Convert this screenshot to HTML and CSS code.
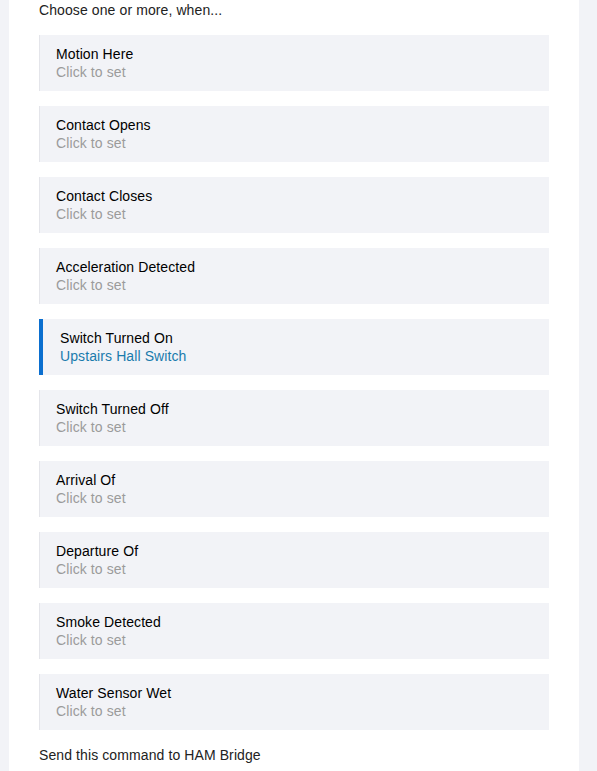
FILE: index.html
```html
<!DOCTYPE html>
<html lang="en">
<head>
  <meta charset="UTF-8" />
  <title>Choose triggers</title>
  <link rel="stylesheet" href="styles.css">
</head>
<body>
  <div class="page">
    <p class="label">Choose one or more, when...</p>

    <div class="option">
      <div class="name">Motion Here</div>
      <div class="value">Click to set</div>
    </div>
    <div class="option">
      <div class="name">Contact Opens</div>
      <div class="value">Click to set</div>
    </div>
    <div class="option">
      <div class="name">Contact Closes</div>
      <div class="value">Click to set</div>
    </div>
    <div class="option">
      <div class="name">Acceleration Detected</div>
      <div class="value">Click to set</div>
    </div>
    <div class="option selected">
      <div class="name">Switch Turned On</div>
      <div class="value">Upstairs Hall Switch</div>
    </div>
    <div class="option">
      <div class="name">Switch Turned Off</div>
      <div class="value">Click to set</div>
    </div>
    <div class="option">
      <div class="name">Arrival Of</div>
      <div class="value">Click to set</div>
    </div>
    <div class="option">
      <div class="name">Departure Of</div>
      <div class="value">Click to set</div>
    </div>
    <div class="option">
      <div class="name">Smoke Detected</div>
      <div class="value">Click to set</div>
    </div>
    <div class="option">
      <div class="name">Water Sensor Wet</div>
      <div class="value">Click to set</div>
    </div>

    <p class="label bottom">Send this command to HAM Bridge</p>
  </div>
</body>
</html>
```

FILE: styles.css
```css
body {
  margin: 0;
  background: #f2f3f7;
  font-family: "Liberation Sans", Arial, sans-serif;
  font-size: 14px;
  line-height: 18px;
  letter-spacing: 0.1px;
  color: #000;
}
.page {
  margin: 0 18px 0 9px;
  background: #fff;
  padding: 1px 30px 7px 30px;
  min-height: 771px;
  box-sizing: border-box;
}
.label {
  margin: 0 0 16px 0;
  color: #222;
}
.label.bottom {
  margin-top: 16px;
}
.option {
  background: #f2f3f7;
  border-left: 1px solid #e4e5ea;
  padding: 10px 16px;
  margin-bottom: 15px;
}
.option:last-of-type {
  margin-bottom: 0;
}
.name {
  color: #000;
}
.value {
  color: #9b9b9b;
}
.option.selected {
  border-left: 4px solid #0b6fcf;
  padding-left: 17px;
}
.option.selected .value {
  color: #1a7bad;
}
```
